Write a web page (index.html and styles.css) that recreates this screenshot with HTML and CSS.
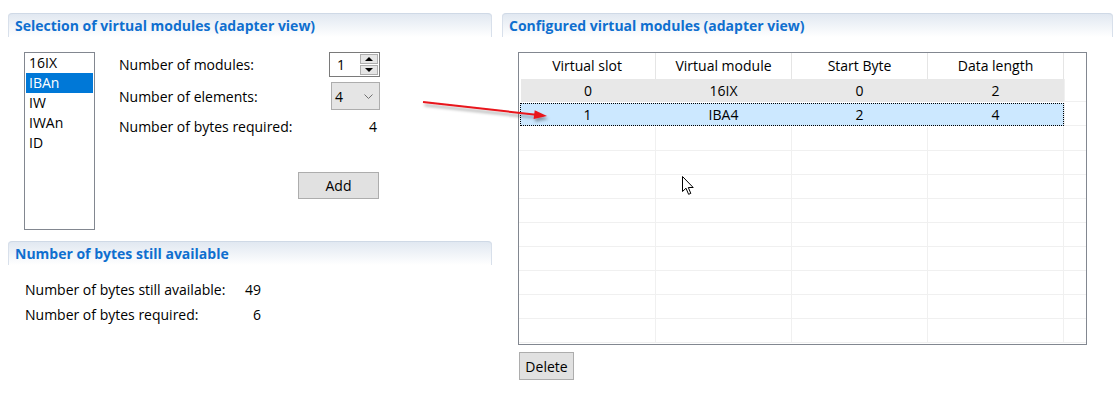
FILE: index.html
```html
<!DOCTYPE html>
<html lang="en">
<head>
    <meta charset="UTF-8">
    <title>Virtual modules</title>
    <link rel="stylesheet" href="styles.css">
</head>
<body>
    <div class="page">
        <div class="left">
            <div class="section-head">Selection of virtual modules (adapter view)</div>
            <div class="selection">
                <ul class="listbox">
                    <li>16IX</li>
                    <li class="selected">IBAn</li>
                    <li>IW</li>
                    <li>IWAn</li>
                    <li>ID</li>
                </ul>
                <div class="form">
                    <div class="form-row row-modules">
                        <span>Number of modules:</span>
                        <div class="spin">
                            <span class="spin-val">1</span>
                            <div class="spin-btns">
                                <span class="spin-btn"><i class="tri up"></i></span>
                                <span class="spin-btn"><i class="tri down"></i></span>
                            </div>
                        </div>
                    </div>
                    <div class="form-row row-elements">
                        <span>Number of elements:</span>
                        <div class="combo">
                            <span>4</span>
                            <svg class="chev" viewBox="0 0 9 5" width="9" height="5">
                                <polyline points="0.5,0.5 4.5,4.5 8.5,0.5" fill="none" stroke="#707070" stroke-width="1"/>
                            </svg>
                        </div>
                    </div>
                    <div class="form-row row-bytes">
                        <span>Number of bytes required:</span>
                        <span class="val">4</span>
                    </div>
                    <div class="form-row row-add">
                        <button class="btn add-btn">Add</button>
                    </div>
                </div>
            </div>

            <div class="section-head">Number of bytes still available</div>
            <div class="stats">
                <span>Number of bytes still available:</span><span class="val">49</span>
                <span>Number of bytes required:</span><span class="val">6</span>
            </div>
        </div>

        <div class="right">
            <div class="section-head">Configured virtual modules (adapter view)</div>
            <div class="table-wrap">
                <div class="grid">
                    <div class="row head">
                        <div class="cells">
                            <span class="cell">Virtual slot</span>
                            <span class="cell">Virtual module</span>
                            <span class="cell">Start Byte</span>
                            <span class="cell">Data length</span>
                        </div>
                        <span class="filler"></span>
                    </div>
                    <div class="row filled">
                        <div class="cells">
                            <span class="cell">0</span>
                            <span class="cell">16IX</span>
                            <span class="cell">0</span>
                            <span class="cell">2</span>
                        </div>
                        <span class="filler"></span>
                    </div>
                    <div class="row filled current">
                        <div class="cells">
                            <span class="cell">1</span>
                            <span class="cell">IBA4</span>
                            <span class="cell">2</span>
                            <span class="cell">4</span>
                        </div>
                        <span class="filler"></span>
                    </div>
                    <div class="row"><div class="cells"><span class="cell"></span><span class="cell"></span><span class="cell"></span><span class="cell"></span></div><span class="filler"></span></div>
                    <div class="row"><div class="cells"><span class="cell"></span><span class="cell"></span><span class="cell"></span><span class="cell"></span></div><span class="filler"></span></div>
                    <div class="row"><div class="cells"><span class="cell"></span><span class="cell"></span><span class="cell"></span><span class="cell"></span></div><span class="filler"></span></div>
                    <div class="row"><div class="cells"><span class="cell"></span><span class="cell"></span><span class="cell"></span><span class="cell"></span></div><span class="filler"></span></div>
                    <div class="row"><div class="cells"><span class="cell"></span><span class="cell"></span><span class="cell"></span><span class="cell"></span></div><span class="filler"></span></div>
                    <div class="row"><div class="cells"><span class="cell"></span><span class="cell"></span><span class="cell"></span><span class="cell"></span></div><span class="filler"></span></div>
                    <div class="row"><div class="cells"><span class="cell"></span><span class="cell"></span><span class="cell"></span><span class="cell"></span></div><span class="filler"></span></div>
                    <div class="row"><div class="cells"><span class="cell"></span><span class="cell"></span><span class="cell"></span><span class="cell"></span></div><span class="filler"></span></div>
                    <div class="row"><div class="cells"><span class="cell"></span><span class="cell"></span><span class="cell"></span><span class="cell"></span></div><span class="filler"></span></div>
                </div>
                <button class="btn delete-btn">Delete</button>
            </div>
        </div>
    </div>

    <!-- annotation arrow drawn over the screenshot -->
    <svg class="arrow" viewBox="0 0 145 35" width="145" height="35">
        <defs>
            <filter id="shadow" x="-10%" y="-50%" width="120%" height="200%">
                <feDropShadow dx="1.5" dy="3" stdDeviation="1.5" flood-color="#000" flood-opacity="0.35"/>
            </filter>
        </defs>
        <g filter="url(#shadow)">
            <line x1="8" y1="10" x2="121" y2="22.7" stroke="#e8141b" stroke-width="2"/>
            <polygon points="132,24 118.6,27 119.7,18.3" fill="#e8141b"/>
        </g>
    </svg>

    <!-- mouse pointer -->
    <svg class="pointer" viewBox="0 0 13 20" width="13" height="20">
        <path d="M0.5,0.5 L0.5,15.5 L4,12.2 L6.6,18.3 L8.8,17.4 L6.3,11.5 L11.2,11.5 Z" fill="#fff" stroke="#000" stroke-width="1" stroke-linejoin="miter"/>
    </svg>
</body>
</html>
```

FILE: styles.css
```css
* {
    margin: 0;
    padding: 0;
    box-sizing: border-box;
}

body {
    font-family: 'Open Sans', 'Noto Sans', sans-serif;
    font-size: 14px;
    color: #000;
    background: #fff;
    width: 1113px;
    height: 395px;
    overflow: hidden;
    position: relative;
}

.page {
    display: flex;
    padding-top: 13px;
}

.left {
    width: 484px;
    margin-left: 8px;
}

.right {
    flex: 1;
    margin-left: 10px;
}

.section-head {
    height: 24px;
    line-height: 23px;
    padding-left: 7px;
    font-weight: 700;
    font-size: 14px;
    color: #0f6fcf;
    background: linear-gradient(#e1e8f1, #fff);
    border-top: 1px solid #cfd9e6;
    border-radius: 4px 4px 0 0;
    box-shadow: inset 1px 0 #d8e0eb, inset -1px 0 #d8e0eb;
    white-space: nowrap;
}

/* selection block */
.selection {
    display: flex;
    padding: 15px 0 0 16px;
    margin-bottom: 11px;
}

.listbox {
    list-style: none;
    width: 71px;
    height: 178px;
    border: 1px solid #828790;
    padding: 0 1px;
}

.listbox li {
    height: 20px;
    line-height: 20px;
    padding-left: 3px;
}

.listbox li.selected {
    background: #0078d7;
    color: #fff;
}

.form {
    width: 261px;
    margin-left: 24px;
}

.form-row {
    display: flex;
    justify-content: space-between;
    align-items: center;
}

.row-modules {
    height: 25px;
}

.row-elements {
    height: 28px;
    margin-top: 5px;
}

.row-bytes {
    height: 20px;
    margin-top: 6px;
}

.row-bytes .val {
    padding-right: 3px;
}

.row-add {
    justify-content: flex-end;
    margin-top: 36px;
    padding-right: 1px;
}

.spin {
    display: flex;
    width: 51px;
    height: 25px;
    border: 1px solid #7a7a7a;
}

.spin-val {
    flex: 1;
    line-height: 23px;
    padding-left: 7px;
}

.spin-btns {
    width: 20px;
    display: flex;
    flex-direction: column;
    gap: 1px;
    padding: 1px;
    background: #fff;
}

.spin-btn {
    flex: 1;
    background: #e5e5e5;
    border: 1px solid #adadad;
    display: flex;
    align-items: center;
    justify-content: center;
}

.tri {
    width: 0;
    height: 0;
    border-left: 4px solid transparent;
    border-right: 4px solid transparent;
}

.tri.up {
    border-bottom: 4px solid #000;
}

.tri.down {
    border-top: 4px solid #000;
}

.combo {
    width: 49px;
    height: 28px;
    background: #e5e5e5;
    border: 1px solid #adadad;
    display: flex;
    align-items: center;
    justify-content: space-between;
    padding: 0 6px 0 3px;
}

.chev {
    display: block;
}

.btn {
    font-family: inherit;
    font-size: 14px;
    color: #000;
    background: #e1e1e1;
    border: 1px solid #adadad;
}

.add-btn {
    width: 81px;
    height: 27px;
}

/* bytes still available */
.stats {
    display: grid;
    grid-template-columns: 210px 26px;
    row-gap: 5px;
    padding: 15px 0 0 17px;
    line-height: 20px;
}

.stats .val {
    text-align: right;
}

/* configured modules table */
.table-wrap {
    padding: 15px 0 0 16px;
}

.grid {
    width: 569px;
    height: 293px;
    border: 1px solid #828790;
    overflow: hidden;
}

.row {
    display: flex;
    height: 24px;
    border-bottom: 1px solid #f0f0f0;
}

.row.head {
    height: 26px;
    border-bottom: none;
}

.cells {
    display: flex;
    width: 545px;
}

.cell {
    width: 136px;
    border-right: 1px solid #f0f0f0;
    text-align: center;
    line-height: 23px;
}

.cell:first-child {
    width: 137px;
}

.row.head .cell {
    border-right-color: #e5e5e5;
    line-height: 26px;
}

.filler {
    flex: 1;
}

.row.filled {
    border-bottom-color: #fff;
}

.row.filled .cells {
    background: #e8e8e8;
    margin-left: 2px;
    width: 543px;
}

.row.filled .cell {
    border-right-color: transparent;
}

.row.filled .cell:first-child {
    width: 135px;
}

.row.filled .filler {
    border-left: 1px solid #f0f0f0;
    border-bottom: 1px solid #f0f0f0;
}

.row.current .cells {
    background: #cce8ff;
    outline: 1px dotted #000;
    outline-offset: -1px;
    margin-left: 1px;
    width: 544px;
}

.row.current .cell:first-child {
    width: 136px;
}

.delete-btn {
    display: block;
    width: 55px;
    height: 28px;
    margin: 7px 0 0 1px;
}

/* overlays */
.arrow {
    position: absolute;
    left: 415px;
    top: 92px;
}

.pointer {
    position: absolute;
    left: 682px;
    top: 176px;
}
```
